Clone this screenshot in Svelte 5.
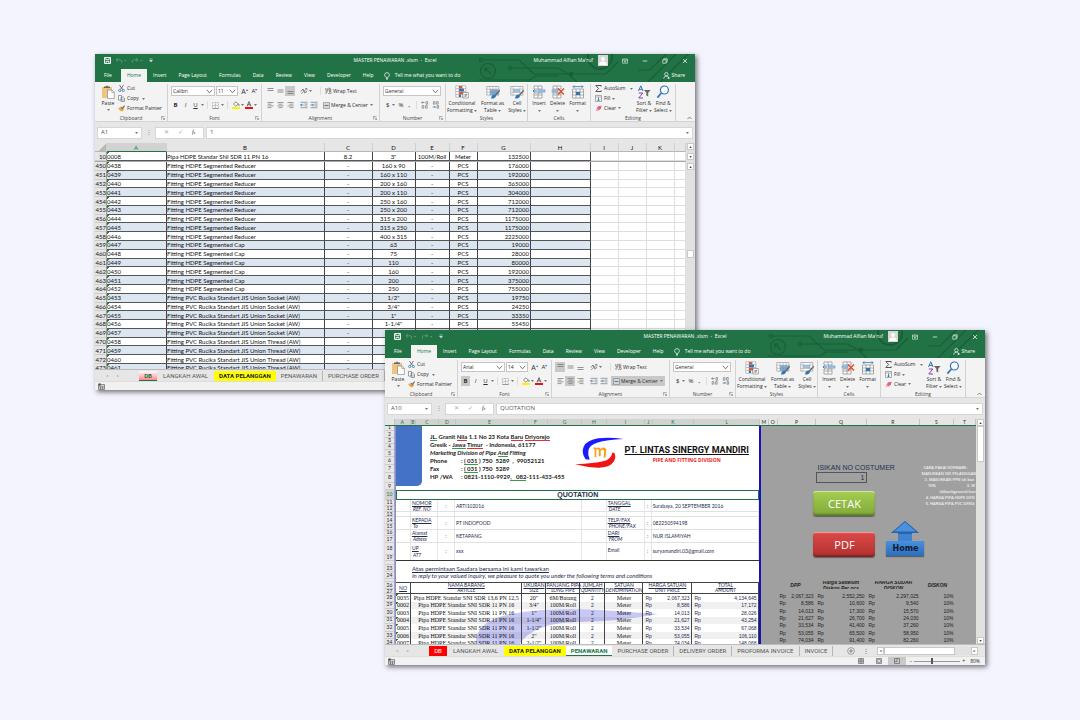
<script>
  const menu = ['File', 'Home', 'Insert', 'Page Layout', 'Formulas', 'Data', 'Review', 'View', 'Developer', 'Help'];

  const stockColumns = ['A', 'B', 'C', 'D', 'E', 'F', 'G', 'H', 'I', 'J', 'K', ''];
  const R = 'Fitting HDPE Segmented Reducer';
  const C = 'Fitting HDPE Segmented Cap';
  const S = 'Fitting PVC Rucika Standart JIS Union Socket (AW)';
  const T = 'Fitting PVC Rucika Standart JIS Union Thread (AW)';
  const stock = [
    [R, '160 x 90', '176000'], [R, '160 x 110', '192000'], [R, '200 x 160', '365000'],
    [R, '200 x 110', '304000'], [R, '250 x 160', '712000'], [R, '250 x 200', '712000'],
    [R, '315 x 200', '1175000'], [R, '315 x 250', '1175000'], [R, '400 x 315', '2225000'],
    [C, '63', '19000'], [C, '75', '28000'], [C, '110', '80000'], [C, '160', '192000'],
    [C, '200', '375000'], [C, '250', '755000'], [S, '1/2"', '19750'], [S, '3/4"', '24250'],
    [S, '1"', '33350'], [S, '1-1/4"', '55450'], [S], [T], [T], [T], [T]
  ].map(([name, size, price], i) => ({ row: 450 + i, code: '0' + (438 + i), name, size, price }));

  const quoteColumns = [
    ['A', 15], ['B', 5], ['C', 22], ['D', 17], ['E', 69], ['F', 24], ['G', 34], ['H', 25], ['I', 38],
    ['J', 7], ['K', 42], ['L', 67], ['M', 8], ['O', 8], ['P', 39], ['Q', 51], ['R', 54], ['S', 34], ['T', 22]
  ];
  const quoteRows = [
    [1, 6], [2, 7], [3, 6], [4, 6], [5, 7], [6, 8], [7, 8], [8, 10], [9, 7], [10, 10], [11, 6], [12, 6],
    [13, 5], [14, 7], [15, 6], [16, 6], [17, 7], [18, 12], [19, 6], ['', 4], [23, 7], [24, 7], ['', 3], [26, 7], [27, 5]
  ];
  const items = [
    ['0035', 'Pipa HDPE Standar SNI SDR 13,6 PN 12,5', '20"', '6M/Batang', '2,067,323', '4,134,645', '2,552,250', '2,297,025'],
    ['0002', 'Pipa HDPE Standar SNI SDR 11 PN 16', '3/4"', '100M/Roll', '8,586', '17,172', '10,600', '9,540'],
    ['0003', 'Pipa HDPE Standar SNI SDR 11 PN 16', '1"', '100M/Roll', '14,013', '28,026', '17,300', '15,570'],
    ['0004', 'Pipa HDPE Standar SNI SDR 11 PN 16', '1-1/4"', '100M/Roll', '21,627', '43,254', '26,700', '24,030'],
    ['0005', 'Pipa HDPE Standar SNI SDR 11 PN 16', '1-1/2"', '100M/Roll', '33,534', '67,068', '41,400', '37,260'],
    ['0006', 'Pipa HDPE Standar SNI SDR 11 PN 16', '2"', '100M/Roll', '53,055', '106,110', '65,500', '58,950'],
    ['0007', 'Pipa HDPE Standar SNI SDR 11 PN 16', '2-1/2"', '100M/Roll', '74,034', '148,068', '91,400', '82,260']
  ];
  const heads = [
    ['NO', ''], ['NAMA BARANG', 'ARTICLE'], ['UKURAN', 'SIZE'], ['PANJANG PIPA', 'LONG PIPE'], ['JUMLAH', 'QUANTITY'],
    ['SATUAN', 'DENOMINATION'], ['HARGA SATUAN', 'UNIT PRICE'], ['TOTAL', 'AMOUNT']
  ];
  const info = [
    ['NOMOR', 'REF. NO', ':', 'ARTI102016', 'TANGGAL', 'DATE', ':', 'Surabaya, 20 SEPTEMBER 2016', 12],
    ['', '', '', '', '', '', '', '', 5],
    ['KEPADA', 'To', ':', 'PT INDOFOOD', 'TELP/FAX', 'PHONE/FAX', ':', '082250594198', 13],
    ['Alamat', 'Adress', ':', 'KETAPANG', 'DARI', 'FROM', ':', 'NUR ISLAMIYAH', 13],
    ['UP', 'ATT', ':', 'xxx', 'Email', '', ':', 'suryamandiri.03@gmail.com', 18]
  ];
  const stockTabs = [['DB', 'pink'], ['LANGKAH AWAL', 'first'], ['DATA PELANGGAN', 'yellow'], ['PENAWARAN', ''], ['PURCHASE ORDER', '']];
  const quoteTabs = [
    ['DB', 'red'], ['LANGKAH AWAL', 'first'], ['DATA PELANGGAN', 'yellow'], ['PENAWARAN', 'active'], ['PURCHASE ORDER', ''],
    ['DELIVERY ORDER', ''], ['PROFORMA INVOICE', ''], ['INVOICE', '']
  ];
</script>

{#snippet arrow()}<svg class="arrow" width="3" height="2" viewBox="0 0 3 2"><path d="M0 0h3L1.5 2z" fill="#777" /></svg>{/snippet}

{#snippet chevron()}<svg class="chev" width="7" height="5" viewBox="0 0 7 5"><path d="M.8.8 3.5 3.8 6.2.8" fill="none" stroke="#555" stroke-width=".8" /></svg>{/snippet}

{#snippet lines(kind)}
  <svg width="7" height="8" viewBox="0 0 7 8">
    {#if kind === 'top'}<path d="M.5 1.5h6M.5 3.5h6" stroke="#777" stroke-width=".8" />
    {:else if kind === 'middle'}<path d="M.5 3h6M.5 5h6" stroke="#777" stroke-width=".8" />
    {:else if kind === 'bottom'}<path d="M.5 4.5h6M.5 6.5h6" stroke="#777" stroke-width=".8" />
    {:else if kind === 'left'}<path d="M.5 1.5h6M.5 3.2h4M.5 4.9h6M.5 6.6h4" stroke="#777" stroke-width=".7" />
    {:else if kind === 'center'}<path d="M.5 1.5h6M1.5 3.2h4M.5 4.9h6M1.5 6.6h4" stroke="#777" stroke-width=".7" />
    {:else}<path d="M.5 1.5h6M2.5 3.2h4M.5 4.9h6M2.5 6.6h4" stroke="#777" stroke-width=".7" />{/if}
  </svg>
{/snippet}

{#snippet launcher()}<svg class="launch" width="4" height="4" viewBox="0 0 4 4"><path d="M.4 3.6V.4h3.2M1.5 1.5l2 2M3.6 1.9v1.7H1.9" fill="none" stroke="#777" stroke-width=".6" /></svg>{/snippet}

{#snippet greenTop()}
  <header class="top">
    <svg class="circuit" width="217" height="28" viewBox="0 0 217 28" fill="none" stroke="#1a5e37" stroke-width="1.2">
      <circle cx="3" cy="6" r="1.6" /><path d="M5 6h36l15 14h34l9 8" />
      <circle cx="10" cy="17" r="7.5" /><path d="M13 20 7 14m0 4v-4h4" />
      <circle cx="32" cy="14" r="1.6" /><path d="M34 14h46l10 6h38l12-12" />
      <path d="M0 26h52l6-4h22" /><circle cx="93" cy="20" r="1.8" fill="#1a5e37" />
      <circle cx="122" cy="3" r="12" stroke-width="2" />
      <path d="M170 28 198 0M182 28 210 0M160 16h12l16-16" />
    </svg>
    <div class="title">
      <div class="quick">
        <svg width="7" height="7" viewBox="0 0 7 7"><path d="M.5.5h6v6h-6zM1.8.5v2.2h3.4V.5M2 6.5V4.4h3v2.1" fill="none" stroke="#fff" stroke-width=".9" /></svg>
        <svg width="12" height="7" viewBox="0 0 12 7"><path d="M3 1 1 2.8 3 4.6M1 2.8h4.5q2 .2 1 3" fill="none" stroke="#5f9a78" stroke-width=".9" /><path d="M9 3h2.4l-1.2 1.4z" fill="#5f9a78" /></svg>
        <svg width="12" height="7" viewBox="0 0 12 7"><path d="M5 1l2 1.8-2 1.8M7 2.8H2.5q-2 .2-1 3" fill="none" stroke="#5f9a78" stroke-width=".9" /><path d="M9 3h2.4l-1.2 1.4z" fill="#5f9a78" /></svg>
        <svg width="4" height="5" viewBox="0 0 4 5"><path d="M.4.8h3.2M.4 2.2h3.2L2 4z" fill="#dfeee5" stroke="#dfeee5" stroke-width=".4" /></svg>
      </div>
      <div class="name">MASTER PENAWARAN .xlsm &nbsp;- &nbsp;Excel</div>
      <div class="user">
        <span>Muhammad Alfian Ma'ruf</span>
        <svg class="avatar" width="10" height="11" viewBox="0 0 10 11"><path d="M0 0h10v11H0z" fill="#d9d6d6" /><circle cx="5" cy="4" r="2" fill="#fff" /><path d="M1 10q0-3.4 4-3.4t4 3.4z" fill="#fff" /></svg>
        <svg width="6" height="6" viewBox="0 0 6 6"><path d="M.5 1h5v4.2h-5zM.5 2.2h5M3 4.8V3M2.2 3.7 3 3l.8.7" fill="none" stroke="#e8f2ec" stroke-width=".6" /></svg>
        <svg width="6" height="6" viewBox="0 0 6 6"><path d="M.8 3h4.4" stroke="#fff" stroke-width=".7" /></svg>
        <svg width="6" height="6" viewBox="0 0 6 6"><path d="M.8 1.8h3.4v3.4H.8zM1.8 1.8v-1h3.4v3.4h-1" fill="none" stroke="#fff" stroke-width=".6" /></svg>
        <svg width="6" height="6" viewBox="0 0 6 6"><path d="m1 1 4 4M5 1 1 5" stroke="#fff" stroke-width=".7" /></svg>
      </div>
    </div>
    <nav class="menu">
      {#each menu as m}<button class:on={m === 'Home'}>{m}</button>{/each}
      <svg class="bulb" width="6" height="8" viewBox="0 0 6 8"><path d="M2 5.4Q.6 4 .6 2.8.8.7 3 .6q2.2.1 2.4 2.2Q5.4 4 4 5.4zM2 6.4h2M2.3 7.4h1.4" fill="none" stroke="#fff" stroke-width=".7" /></svg>
      <button class="tell">Tell me what you want to do</button>
      <button class="share">
        <svg width="7" height="7" viewBox="0 0 7 7"><circle cx="3.4" cy="2.2" r="1.7" fill="none" stroke="#fff" stroke-width=".7" /><path d="M.6 6.8q.3-2.6 2.8-2.7 1.3.1 2 .8M4.4 6h2.4M5.6 4.8v2.2" fill="none" stroke="#fff" stroke-width=".7" /></svg>
        Share
      </button>
    </nav>
  </header>
{/snippet}

{#snippet ribbon(o)}
  <section class="ribbon">
    <div class="group">
      <div class="tools clip">
        <button class="big paste">
          <svg width="14" height="14" viewBox="0 0 14 14"><path d="M1 2h10v11H1z" fill="#edc57c" /><path d="M3 3V1.5h2Q6-.4 7 1.5h2V3z" fill="#666" /><path d="M6.5 5H11l2.3 2.2v6.4H6.5z" fill="#fff" stroke="#888" stroke-width=".7" /><path d="M10.8 5v2.5h2.5" fill="none" stroke="#888" stroke-width=".6" /></svg>
          <span>Paste</span>{@render arrow()}
        </button>
        <div class="stack">
          <button><svg width="7" height="7" viewBox="0 0 7 7"><path d="M1.5 0l3 4.5M5.5 0l-3 4.5" stroke="#555" stroke-width=".8" /><circle cx="1.7" cy="5.5" r="1.1" fill="none" stroke="#2f75b5" stroke-width=".8" /><circle cx="5.3" cy="5.5" r="1.1" fill="none" stroke="#2f75b5" stroke-width=".8" /></svg>Cut</button>
          <button><svg width="7" height="7" viewBox="0 0 7 7"><path d="M.5.5h3v4.6h-3zM3 2h2.3l1.2 1.2v3.3H3z" fill="#fff" stroke="#777" stroke-width=".7" /><path d="M3.8 4h2M3.8 5.2h2" stroke="#2f75b5" stroke-width=".5" /></svg>Copy&nbsp; {@render arrow()}</button>
          <button><svg width="7" height="7" viewBox="0 0 7 7"><path d="m6.8.3-2.5 2 .9 1L7 .9z" fill="#555" /><path d="M.2 3 3.5 2l2 2-1 2.5L2 5.5z" fill="#e8a33d" /><path d="M3.2 1.8l2.4 2.6" stroke="#444" stroke-width=".9" /></svg>Format Painter</button>
        </div>
      </div>
      <footer>Clipboard {@render launcher()}</footer>
    </div>
    <div class="group">
      <div class="tools two">
        <div class="line">
          <label class="pick face"><select aria-label="Font"><option>{o.font}</option></select>{@render chevron()}</label>
          <label class="pick size"><select aria-label="Font size"><option>{o.size}</option></select>{@render chevron()}</label>
          <button class="grow">A<sup>▴</sup></button><button class="grow less">A<sup>▾</sup></button>
        </div>
        <div class="line letters">
          <button class="sq" class:down={o.bold}><b>B</b></button><button class="sq"><i>I</i></button>
          <button class="sq"><u>U</u></button>{@render arrow()}
          <span class="rule"></span>
          <button class="sq"><svg width="7" height="7" viewBox="0 0 7 7"><path d="M.5.5h6v6h-6zM3.5.5v6M.5 3.5h6" fill="none" stroke="#999" stroke-width=".6" stroke-dasharray="1 .5" /><path d="M.4 6.6h6.2" stroke="#666" stroke-width=".6" /></svg></button>{@render arrow()}
          <span class="rule"></span>
          <button class="sq"><svg width="8" height="8" viewBox="0 0 8 8"><path d="M1.5 3 4 .8l2.3 2.4L3.6 5z" fill="#fff" stroke="#555" stroke-width=".7" /><path d="M6.6 2.8q1 1.4.3 2.2" stroke="#2f75b5" stroke-width=".8" fill="none" /><path d="M0 6h8v2H0z" fill="#fff200" /></svg></button>{@render arrow()}
          <button class="sq"><svg width="8" height="8" viewBox="0 0 8 8"><path d="M2 5.4 4 .6l2 4.8M2.7 3.8h2.6" fill="none" stroke="#444" stroke-width=".8" /><path d="M0 6h8v2H0z" fill="#e5121c" /></svg></button>{@render arrow()}
        </div>
      </div>
      <footer>Font {@render launcher()}</footer>
    </div>
    <div class="group">
      <div class="tools two">
        <div class="line">
          {#each ['top', 'middle', 'bottom'] as k}<button class="al" class:down={o.valign === k}>{@render lines(k)}</button>{/each}
          <button class="al far"><svg width="9" height="8" viewBox="0 0 9 8"><path d="M1 7 7 1.5M7 1.5H5M7 1.5v2" stroke="#777" stroke-width=".7" fill="none" /><path d="M1 4.5 3 2l1.5 3M4 6l3-1.5" stroke="#555" stroke-width=".8" fill="none" /></svg></button>{@render arrow()}
          <span class="rule tall"></span>
          <button class="txt"><svg width="7" height="8" viewBox="0 0 7 8"><path d="M.8 1v2.4h2V1.8h-1M4 .5v3h1.8V1.8H4M1 7V4.8h2M4 4.5h1.8Q6.8 5 6 6.4H3.5l1-1" fill="none" stroke="#666" stroke-width=".7" /></svg>Wrap Text</button>
        </div>
        <div class="line">
          {#each ['left', 'center', 'right'] as k}<button class="al" class:down={o.halign === k}>{@render lines(k)}</button>{/each}
          <button class="al far"><svg width="8" height="8" viewBox="0 0 8 8"><path d="M.5 1.3h7M4.5 3.1h3M4.5 4.9h3M.5 6.7h7" stroke="#777" stroke-width=".7" /><path d="M3.6 4H.6M1.8 2.8.6 4l1.2 1.2" stroke="#2f75b5" stroke-width=".8" fill="none" /></svg></button>
          <button class="al"><svg width="8" height="8" viewBox="0 0 8 8"><path d="M.5 1.3h7M4.5 3.1h3M4.5 4.9h3M.5 6.7h7" stroke="#777" stroke-width=".7" /><path d="M.4 4h3M2.4 2.8 3.6 4 2.4 5.2" stroke="#2f75b5" stroke-width=".8" fill="none" /></svg></button>
          <button class="txt merge" class:down={o.merge}><svg width="7" height="7" viewBox="0 0 7 7"><path d="M.5.5h6v6h-6zM.5 2h6M.5 5h6" fill="#fff" stroke="#777" stroke-width=".6" /><path d="M1.4 3.5h4.2" stroke="#2f75b5" stroke-width=".9" /></svg>Merge &amp; Center&nbsp; {@render arrow()}</button>
        </div>
      </div>
      <footer>Alignment {@render launcher()}</footer>
    </div>
    <div class="group">
      <div class="tools two">
        <div class="line"><label class="pick wide"><select aria-label="Number format"><option>General</option></select>{@render chevron()}</label></div>
        <div class="line nums">
          <span>$</span>{@render arrow()}<span>%</span><b>,</b><span class="rule"></span>
          <svg width="8" height="8" viewBox="0 0 8 8"><path d="M3.5 1.5H.6M1.6.6.6 1.5l1 1" stroke="#2f75b5" stroke-width=".7" fill="none" /><path d="M5 .6h1.6v2.6H5zM1.2 4.6h1.6v2.6H1.2zM4.6 4.6h1.6v2.6H4.6z" fill="none" stroke="#666" stroke-width=".6" /></svg>
          <svg width="8" height="8" viewBox="0 0 8 8"><path d="M.6 6h2.6M2.4 5l1 1-1 1" stroke="#2f75b5" stroke-width=".7" fill="none" /><path d="M1.4.6H3v2.6H1.4zM4.6.6h1.6v2.6H4.6zM5 4.6h1.6v2.6H5z" fill="none" stroke="#666" stroke-width=".6" /></svg>
        </div>
      </div>
      <footer>Number {@render launcher()}</footer>
    </div>
    <div class="group">
      <div class="tools bigs">
        <button class="big">
          <svg width="14" height="14" viewBox="0 0 14 14"><path d="M.8.8h10v11.4h-10zM4 .8v11.4M7.4.8v11.4M.8 3.6h10M.8 6.5h10M.8 9.4h10" fill="#fff" stroke="#999" stroke-width=".6" /><path d="M4 1h3v2.4H4zM4 6.8h4v2.4H4z" fill="#e2542c" /><path d="M4 3.8h5v2.4H4zM4 9.6h2v2.4H4z" fill="#2f75b5" /><path d="M8 7.5h5.4V13H8z" fill="#fff" stroke="#777" stroke-width=".6" /><path d="M9.3 9.6h2.8M9.3 11h2.8M11.8 8.6 9.8 12" stroke="#555" stroke-width=".5" /></svg>
          <span>Conditional<br />Formatting {@render arrow()}</span>
        </button>
        <button class="big">
          <svg width="14" height="14" viewBox="0 0 14 14"><path d="M.8 1.5h12v8.6H.8z" fill="#fff" stroke="#888" stroke-width=".6" /><path d="M4 4.4h8.8v5.7H4z" fill="#7fb0dd" /><path d="M.8 4.2h12M.8 7.2h12M4 1.5v8.6M7 1.5v8.6M10 1.5v8.6" stroke="#888" stroke-width=".5" /><path d="m13.6 4.4-5 5.6 1 1 4.4-5z" fill="#666" /><path d="M8.6 9.6q-3 .2-3.6 3.9 4 .2 5-2.6z" fill="#2f75b5" /></svg>
          <span>Format as<br />Table {@render arrow()}</span>
        </button>
        <button class="big">
          <svg width="14" height="14" viewBox="0 0 14 14"><path d="M.8 1.5h12v8.6H.8z" fill="#fff" stroke="#888" stroke-width=".6" /><path d="M3 4h7v3.4H3z" fill="#9cc3e6" /><path d="M.8 4h12M.8 7.4h12M3 1.5v8.6M10 1.5v8.6" stroke="#999" stroke-width=".5" /><path d="m13.6 4.4-5 5.6 1 1 4.4-5z" fill="#666" /><path d="M8.6 9.6q-3 .2-3.6 3.9 4 .2 5-2.6z" fill="#2f75b5" /></svg>
          <span>Cell<br />Styles {@render arrow()}</span>
        </button>
      </div>
      <footer>Styles</footer>
    </div>
    <div class="group">
      <div class="tools bigs cells">
        <button class="big">
          <svg width="14" height="14" viewBox="0 0 14 14"><path d="M2 1h8v3H2zM6 1v3M2 10h8v3H2zM6 10v3M2 10V8h8v2M6 8v2" fill="#fff" stroke="#888" stroke-width=".7" /><path d="M6 4.8h7v2.4H6z" fill="#9cc3e6" stroke="#5b8fc0" stroke-width=".5" /><path d="M5 6H1M2.6 4.5 1 6l1.6 1.5" stroke="#2f75b5" stroke-width=".9" fill="none" /></svg>
          <span>Insert<br />{@render arrow()}</span>
        </button>
        <button class="big">
          <svg width="14" height="14" viewBox="0 0 14 14"><path d="M2 1h8v3H2zM6 1v3M2 10h8v3H2zM6 10v3M2 10V8h8v2M6 8v2" fill="#fff" stroke="#888" stroke-width=".7" /><path d="M1 4.8h6v2.4H1z" fill="#9cc3e6" stroke="#5b8fc0" stroke-width=".5" /><path d="m7 3.5 6 6M13 3.5l-6 6" stroke="#dc4a26" stroke-width="1.4" /></svg>
          <span>Delete<br />{@render arrow()}</span>
        </button>
        <button class="big">
          <svg width="14" height="14" viewBox="0 0 14 14"><path d="M1.5 4h11v9h-11zM1.5 7h11M1.5 10h11M5 4v9M9 4v9" fill="#fff" stroke="#888" stroke-width=".7" /><path d="M5 7h4v3H5z" fill="#2f75b5" /><path d="M2 1.6h10M3.2.4 2 1.6l1.2 1.2M10.8.4 12 1.6l-1.2 1.2" fill="none" stroke="#2f75b5" stroke-width=".8" /></svg>
          <span>Format<br />{@render arrow()}</span>
        </button>
      </div>
      <footer>Cells</footer>
    </div>
    <div class="group">
      <div class="tools edit">
        <div class="stack">
          <button><svg width="7" height="7" viewBox="0 0 7 7"><path d="M6.2 1.6V.5H.8l2.8 3L.8 6.5h5.4V5.4" fill="none" stroke="#444" stroke-width=".9" /></svg>AutoSum &nbsp;{@render arrow()}</button>
          <button><svg width="7" height="7" viewBox="0 0 7 7"><path d="M.5.5h6v6h-6zM.5 2h6" fill="#fff" stroke="#777" stroke-width=".6" /><path d="M3.5 2.4V6M2.2 4.6 3.5 6l1.3-1.4" fill="none" stroke="#2f75b5" stroke-width=".9" /></svg>Fill {@render arrow()}</button>
          <button><svg width="7" height="7" viewBox="0 0 7 7"><path d="M3 1.2 6.6.8 6 3.2 3.6 5.8.8 5.2z" fill="#e0647c" /><path d="M.8 5.2 1.8 3.4l2.4 1.8-.6.8z" fill="#f4b3bf" /></svg>Clear {@render arrow()}</button>
        </div>
        <button class="big">
          <svg width="14" height="14" viewBox="0 0 14 14"><path d="M1.5 6 3.8.8 6 6M2.3 4.4h3" fill="none" stroke="#2f75b5" stroke-width="1" /><path d="M1.8 8h4l-4 5h4.2" fill="none" stroke="#8a3fa0" stroke-width="1" /><path d="M7 5h6.6L11.2 7.8v3.7L9.4 10.5V7.8z" fill="#666" /></svg>
          <span>Sort &amp;<br />Filter {@render arrow()}</span>
        </button>
        <button class="big">
          <svg width="14" height="14" viewBox="0 0 14 14"><circle cx="8.4" cy="5" r="4" fill="#fff" stroke="#2f75b5" stroke-width="1.2" /><path d="M5.4 8 1.4 12.6" stroke="#2f75b5" stroke-width="1.7" /></svg>
          <span>Find &amp;<br />Select {@render arrow()}</span>
        </button>
      </div>
      <footer>Editing</footer>
    </div>
    <div class="fold"><svg width="5" height="4" viewBox="0 0 5 4"><path d="M.5 3 2.5 1l2 2" fill="none" stroke="#555" stroke-width=".7" /></svg></div>
  </section>
  <section class="formula">
    <label class="cellname"><select aria-label="Name box"><option>{o.cell}</option></select>{@render arrow()}</label>
    <span class="dots">⋮</span>
    <div class="fx"><span>✕</span><span>✓</span><i>f<small>x</small></i></div>
    <div class="value"><input aria-label="Formula bar" value={o.value} />{@render arrow()}</div>
  </section>
{/snippet}

{#snippet sheetTabs(tabs, full)}
  <footer class="tabs">
    <span class="navs"><i>◂</i><i>▸</i></span>
    {#each tabs as [t, cls]}<button class={cls}>{t}</button>{/each}
    {#if full}
      <svg class="plus" width="8" height="8" viewBox="0 0 8 8"><circle cx="4" cy="4" r="3.4" fill="none" stroke="#777" stroke-width=".6" /><path d="M4 2v4M2 4h4" stroke="#777" stroke-width=".8" /></svg>
      <span class="vdots">⋮</span>
      <div class="hbar"><i>◂</i><b></b><i>▸</i></div>
    {/if}
  </footer>
{/snippet}

{#snippet macro()}<svg width="7" height="7" viewBox="0 0 7 7"><path d="M.5 1.5h6v5h-6zM.5 3.2h6M2.5 3.2v3.3M4.5 3.2v3.3M.5 5h6" fill="none" stroke="#555" stroke-width=".6" /><circle cx="1.6" cy="1.5" r="1.3" fill="#555" /></svg>{/snippet}

<main>
  <article class="window stock">
    {@render greenTop()}
    {@render ribbon({ font: 'Calibri', size: '11', bold: false, valign: 'bottom', halign: '', merge: false, cell: 'A1', value: '1' })}
    <div class="sheet">
      <div class="tables">
        <table class="grid">
          <colgroup><col class="rh" /><col class="a" /><col class="b" /><col class="c" /><col class="d" /><col class="e" /><col class="f" /><col class="g" /><col class="a" /><col class="i" /><col class="i" /><col class="i" /><col /></colgroup>
          <thead><tr><th class="corner"></th>{#each stockColumns as c}<th class:sel={c === 'A'}>{c}</th>{/each}</tr></thead>
          <tbody>
            <tr><th>10</th><td class="code">0008</td><td>Pipa HDPE Standar SNI SDR 11 PN 16</td><td class="mid">8.2</td><td class="mid">3"</td><td class="mid">100M/Roll</td><td class="mid">Meter</td><td class="num">132500</td><td></td><td class="off"></td><td class="off"></td><td class="off"></td><td class="off"></td></tr>
          </tbody>
        </table>
        <div class="split"></div>
        <div class="scroll">
          <table class="grid body">
            <colgroup><col class="rh" /><col class="a" /><col class="b" /><col class="c" /><col class="d" /><col class="e" /><col class="f" /><col class="g" /><col class="a" /><col class="i" /><col class="i" /><col class="i" /><col /></colgroup>
            <tbody>
              {#each stock as r, i}
                <tr class:tint={i % 2 === 1}>
                  <th>{r.row}</th><td class="code">{r.code}</td><td>{r.name}</td><td class="mid">-</td>
                  <td class="mid">{r.size ?? ''}</td><td class="mid">{r.size ? '-' : ''}</td><td class="mid">{r.size ? 'PCS' : ''}</td><td class="num">{r.price ?? ''}</td><td></td>
                  <td class="off"></td><td class="off"></td><td class="off"></td><td class="off"></td>
                </tr>
              {/each}
            </tbody>
          </table>
        </div>
      </div>
      <div class="vbar twin"><i>▴</i><i>▾</i><i class="low">▴</i><b></b></div>
    </div>
    {@render sheetTabs(stockTabs, false)}
    <div class="status">{@render macro()}</div>
  </article>

  <article class="window quote">
    {@render greenTop()}
    {@render ribbon({ font: 'Arial', size: '14', bold: true, valign: 'top', halign: 'center', merge: true, cell: 'A10', value: 'QUOTATION' })}
    <div class="sheet">
      <div class="work">
        <div class="letters-row">
          <span class="corner"></span>
          {#each quoteColumns as [c, w], i}<span class:sel={i < 12} style="flex-grow:{w}">{c}</span>{/each}
        </div>
        <div class="page">
          <div class="rownums">
            {#each quoteRows as [n, h]}<span class:sel={n === 10} style="height:{h}px">{n}</span>{/each}
            <div class="rest">{#each [28, 29, 30, 31, 32, 33, 34] as n}<span>{n}</span>{/each}</div>
          </div>
          <div class="paper">
            <div class="letterhead">
              <div class="block"></div>
              <address>
                <p><u class="g">JL.</u> Granit <u class="r">Nila</u> 1.1 No 23 Kota <u class="r">Baru</u> <u class="r">Driyorejo</u></p>
                <p>Gresik - <u class="g">Jawa</u> <u class="r">Timur</u>&nbsp; - Indonesia, 61177</p>
                <p><em>Marketing Division of Pipe <u class="g">And</u> Fitting</em></p>
                <p><span>Phone</span>: <u class="g">( 031</u> ) 750&nbsp; 5289&nbsp; ,&nbsp; 99052121</p>
                <p><span>Fax</span>: <u class="g">( 031</u> ) 750&nbsp; 5289</p>
                <p><span>HP /WA</span>: 0821-1110-9929<u class="g">,&nbsp;&nbsp; 082</u>-111-433-455</p>
              </address>
              <svg class="logo" width="52" height="34" viewBox="0 0 156 102">
                <path d="M32 76Q18 56 26 38 36 18 70 13 104 9 146 15 96 17 66 26 42 34 40 50 38 62 44 77z" fill="#1a1aff" />
                <path d="M0 91Q60 88 84 82 108 76 112 56L118 56Q126 74 112 88 98 102 68 101 34 100 0 91z" fill="#f01414" />
                <path d="M54 42q8-6 10 2v26h-5V48q-2-5-5-6zM62 44q10-8 15 1v22h-6V48q-3-4-9-1zM77 45q10-9 17 1l-2 22q-3 6-8 1 4 0 3-3V50q-3-5-10 0z" fill="#f6a01e" />
              </svg>
              <div class="brand"><h1>PT. LINTAS SINERGY MANDIRI</h1><h2>PIPE AND FITTING DIVISION</h2></div>
            </div>
            <div class="heading">QUOTATION</div>
            <div class="info">
              {#each info as [a, b, c, d, e, f, g, h, size]}
                <div class="irow" style="height:{size}px">
                  <span></span><span class="lab"><u>{a}</u><em>{b}</em></span><span class="colon">{c}</span><span class="val">{d}</span>
                  <span></span><span class="lab"><u class:plain={e === 'Email'}>{e}</u><em>{f}</em></span><span class="colon">{g}</span><span class="val">{h}</span>
                </div>
              {/each}
            </div>
            <div class="note"><p><u>Atas permintaan Saudara bersama ini kami tawarkan</u></p><p><em>In reply to your valued inquiry, we pleasure to quote you under the following terms and conditions</em></p></div>
            <div class="lists">
              <svg class="mark" width="190" height="38" viewBox="0 0 190 38" preserveAspectRatio="none"><path d="M0 38Q-2 14 36 7 76 0 128 3L187 7Q150 14 104 15 58 16 44 38z" fill="#4a4ae0" fill-opacity=".3" /></svg>
              <table class="items">
                <colgroup><col class="k1" /><col /><col class="k2" /><col class="k3" /><col class="k4" /><col class="k5" /><col class="k6" /><col class="k7" /></colgroup>
                <thead><tr>{#each heads as [a, b]}<th><u>{a}</u><em>{b}</em></th>{/each}</tr></thead>
                <tbody>
                  {#each items as r}
                    <tr><td class="code">{r[0]}</td><td class="mid">{r[1]}</td><td class="mid">{r[2]}</td><td class="mid">{r[3]}</td><td class="mid sans">2</td><td class="mid">Meter</td>
                      <td class="sans"><div><span>Rp</span><span>{r[4]}</span></div></td><td class="sans"><div><span>Rp</span><span>{r[5]}</span></div></td></tr>
                  {/each}
                </tbody>
              </table>
            </div>
          </div>
          <div class="side">
            <div class="panel">
              <div class="form">
                <label for="customer">ISIKAN NO COSTUMER</label>
                <input id="customer" value="1" />
                <button class="cetak">CETAK</button>
                <button class="pdf">PDF</button>
              </div>
              <a class="home" href="#home">
                <svg width="28" height="20" viewBox="0 0 28 20"><path d="M14 0 28 12h-7v8H7v-8H0z" fill="#3f83d0" /><path d="M14 0 28 12h-7v1H7v-1H0z" fill="#2b62a8" /><path d="M14 1 25 10.5H3z" fill="#4a90de" /></svg>
                <span>Home</span>
              </a>
              <div class="tips">
                <p>&nbsp;&nbsp;CARA PAKAI SOFWARE:</p><p>MASUKKAN NO PELANGGAN</p><p>&nbsp;&nbsp;&nbsp;2. MASUKKAN PPN (di bac</p><p>&nbsp;&nbsp;&nbsp;&nbsp;&nbsp;&nbsp;10% <span></span>3. M</p><p class="in">(dibackground kun</p><p>&nbsp;&nbsp;&nbsp;&nbsp;4. HARGA PIPA HDPE DEN</p><p>&nbsp;&nbsp;&nbsp;&nbsp;5. HARGA PIPA PVC DENG</p>
              </div>
            </div>
            <table class="calc">
              <colgroup><col class="q1" /><col class="q2" /><col class="q3" /><col class="q4" /><col /></colgroup>
              <thead><tr><th>DPP</th><th><div class="cut">Harga Sebelum<br />Diskon Per pcs</div></th><th><div class="cut">HARGA SUDAH<br />DISKON</div></th><th>DISKON</th><th></th></tr></thead>
              <tbody>
                {#each items as r}
                  <tr><td><div><span>Rp</span><span>{r[4]}</span></div></td><td><div><span>Rp</span><span>{r[6]}</span></div></td><td><div><span>Rp</span><span>{r[7]}</span></div></td><td class="num">10%</td><td></td></tr>
                {/each}
              </tbody>
            </table>
          </div>
        </div>
      </div>
      <div class="vbar"><i>▴</i><b class="long"></b><i class="end">▾</i></div>
    </div>
    {@render sheetTabs(quoteTabs, true)}
    <div class="status">
      {@render macro()}
      <div class="views">
        <span><svg width="6" height="6" viewBox="0 0 6 6"><path d="M.5.5h5v5h-5zM.5 2.2h5M.5 3.8h5M2.2.5v5M3.8.5v5" fill="none" stroke="#555" stroke-width=".6" /></svg></span>
        <span><svg width="6" height="6" viewBox="0 0 6 6"><path d="M.5.5h5v5h-5zM1.6 1.6h2.8v2.8H1.6z" fill="none" stroke="#555" stroke-width=".6" /></svg></span>
        <span class="on"><svg width="6" height="6" viewBox="0 0 6 6"><path d="M.5.5h5v5h-5zM.5 3.5H3v-3" fill="none" stroke="#555" stroke-width=".6" /></svg></span>
      </div>
      <span>−</span><input type="range" aria-label="Zoom" min="10" max="150" value="62" /><span>+</span><span class="pct">80%</span>
    </div>
  </article>
</main>

<style>
  :global(body) { background: #f3f4fd; }
  main { position: relative; min-height: 100vh; overflow: hidden; font: 5px/7px "Open Sans", "Noto Sans", sans-serif; color: #2b2b2b; }
  main :is(*, *::before) { box-sizing: border-box; }
  svg { display: block; flex: none; }
  p, h1, h2 { margin: 0; }
  button, select, input { font: inherit; color: inherit; border: 0; background: none; padding: 0; margin: 0; border-radius: 0; outline: 0; }
  button { white-space: nowrap; }
  select { appearance: none; width: 100%; height: 100%; }
  .window { position: absolute; background: #e6e6e6; box-shadow: 2px 2px 5px rgba(0, 0, 0, .55); }
  .stock { left: 95px; right: 385px; top: 54px; }
  .quote { left: 385px; right: 95px; top: 330px; }

  .top { position: relative; background: #217346; color: #fff; height: 28px; overflow: hidden; }
  .circuit { position: absolute; right: 0; top: 0; }
  .title, .menu { position: relative; display: flex; align-items: center; }
  .title { height: 13px; display: grid; grid-template-columns: 1fr auto 1fr; }
  .quick { display: flex; gap: 4px; padding-left: 9px; align-items: center; }
  .quick svg:last-child { margin-left: 2px; }
  .user { display: flex; justify-content: flex-end; align-items: center; gap: 14px; padding-right: 7px; white-space: nowrap; }
  .user span { margin-right: -9px; }
  .avatar { align-self: flex-start; }
  .menu { height: 15px; padding: 2px 10px 0 3px; }
  .menu button { height: 13px; padding: 0 6px; }
  .menu button:first-child { margin-right: 3px; }
  .menu .on { background: #f3f3f3; color: #217346; }
  .bulb { margin-left: 4px; }
  .menu .tell { padding: 0 5px; }
  .share { margin-left: auto; display: flex; align-items: center; gap: 2px; }
  .menu .share { padding: 0; }

  .ribbon { height: 40px; display: grid; grid-template-columns: 73fr 94fr 118fr 66fr 82fr 63fr 85fr 19fr; background: #f3f3f3; border-bottom: 1px solid #d5d5d5; }
  .group { position: relative; display: flex; flex-direction: column; justify-content: space-between; margin: 2px 0 0; border-right: 1px solid #d2d2d2; min-width: 0; }
  .group footer { position: relative; text-align: center; height: 7px; line-height: 8px; color: #444; }
  .launch { position: absolute; right: 2px; top: 2px; }
  .arrow { display: inline-block; vertical-align: middle; }
  .tools { display: flex; height: 29px; }
  .clip { padding-left: 6px; gap: 3px; }
  .stack { display: flex; flex-direction: column; }
  .stack button { display: flex; align-items: center; gap: 2px; height: 10px; white-space: nowrap; }
  .big { display: flex; flex-direction: column; align-items: center; gap: 1px; padding-top: 1px; line-height: 7px; }
  .paste .arrow { margin-top: 1px; }
  .two { flex-direction: column; gap: 4px; padding: 2px 0 0 3px; }
  .line { display: flex; align-items: center; height: 10px; }
  .pick { display: flex; align-items: center; background: #fff; border: 1px solid #c6c6c6; height: 10px; padding: 0 1px; margin-right: 1px; }
  .face { width: 44px; }
  .size { width: 22px; }
  .wide { width: 58px; }
  .grow { font-size: 7px; width: 9px; margin-left: 1px; }
  .grow sup { font-size: 4px; color: #2f75b5; vertical-align: top; line-height: 3px; }
  .grow.less { font-size: 6px; }
  .sq { width: 9px; height: 10px; display: grid; place-items: center; margin-right: 1px; font-size: 6px; }
  .rule { width: 1px; height: 8px; background: #dcdcdc; margin: 0 3px; }
  .down { background: #c8c8c8; }
  .al { width: 10px; height: 10px; display: grid; place-items: center; }
  .al.far { margin-left: 4px; }
  .rule.tall { margin: 0 2px 0 8px; }
  .al + .txt { margin-left: 2px; }
  .txt { display: flex; align-items: center; gap: 1px; height: 10px; padding: 0 2px; }
  .nums { gap: 3px; padding-left: 3px; }
  .nums > span { font-size: 6px; }
  .nums b { margin: 0 2px; }
  .nums .rule { margin: 0 1px; }
  .bigs { justify-content: center; gap: 4px; }
  .edit { padding-left: 4px; gap: 2px; }
  .edit .stack { width: 39px; }
  .fold { display: flex; align-items: flex-end; justify-content: center; padding: 0 0 1px 8px; }

  .formula { display: flex; align-items: center; height: 21px; padding: 0 2px; font-size: 6px; color: #555; }
  .cellname, .fx, .value { display: flex; align-items: center; height: 12px; background: #fff; border: 1px solid #d6d6d6; padding: 0 3px; }
  .cellname { width: 45px; }
  .dots { width: 13px; text-align: center; color: #888; }
  .fx { width: 49px; justify-content: space-around; color: #aaa; }
  .fx i { font-family: "Liberation Serif", serif; color: #333; }
  .fx small { font-size: 4px; }
  .value { flex: 1; margin-left: 2px; }
  .value input { flex: 1; min-width: 0; }

  .sheet { display: flex; }
  .tables { flex: 1; min-width: 0; background: #fff; }
  .grid { width: 100%; table-layout: fixed; border-collapse: separate; border-spacing: 0; font: 6px/7px Lato, sans-serif; color: #111; }
  .grid col.rh { width: 12px; } .grid col.a { width: 60px; } .grid col.b { width: 158px; } .grid col.c { width: 48px; }
  .grid col.d { width: 43px; } .grid col.e { width: 34px; } .grid col.f { width: 28px; } .grid col.g { width: 53px; } .grid col.i { width: 28px; }
  .grid :is(th, td) { padding: 0 1px 0 0; height: 9px; white-space: nowrap; overflow: hidden; font-weight: 400; }
  .grid th { background: #e6e6e6; text-align: right; }
  .grid tbody th { padding: 0; }
  .grid thead th { text-align: center; border-right: 1px solid #cfcfcf; border-bottom: 1px solid #b5b5b5; }
  .grid thead th.sel { background: #d2d2d2; color: #217346; border-bottom-color: #217346; }
  .grid .corner { background: linear-gradient(135deg, #e6e6e6 60%, #b9b9b9 60%); }
  .grid tbody th { border-right: 1px solid #999; border-bottom: 1px solid #ccc; }
  .grid td { border-right: 1px solid #444; border-bottom: 1px solid #555; }
  .grid td.off { border-color: #dedede; background: #fff; }
  .grid.body { height: 211px; }
  .grid.body :is(th, td) { height: auto; }
  .tint td { background-color: #dce6f1; }
  .code { background-image: linear-gradient(135deg, #168a2c 2px, transparent 2px); background-repeat: no-repeat; }
  .mid { text-align: center; }
  td.num { text-align: right; }
  .split { height: 1px; background: #aaa; }
  .scroll { height: 207px; overflow: hidden; }
  .vbar { width: 9px; display: flex; flex-direction: column; background: #e1e1e1; padding: 0 1px; }
  .vbar i { height: 7px; background: #fff; border: 1px solid #c8c8c8; font: 4px/5px "DejaVu Sans", sans-serif; text-align: center; }
  .vbar b { height: 8px; background: #fff; border: 1px solid #c8c8c8; margin-top: 80px; }
  .vbar .long { height: 36px; margin: 0; }
  .twin i:nth-child(2) { margin-top: 3px; }
  .vbar .low { margin-top: 3px; }
  .vbar .end { margin-top: auto; }

  .tabs { position: relative; display: flex; align-items: center; height: 12px; background: #e6e6e6; border-top: 1px solid #bcbcbc; color: #555; font-family: Roboto, sans-serif; font-size: 6px; }
  .navs { width: 44px; display: flex; gap: 9px; padding-left: 11px; color: #aaa; font: 4px/7px "DejaVu Sans", sans-serif; }
  .tabs button { height: 10px; padding: 0 5px; border-right: 1px solid #b5b5b5; }
  .tabs .pink, .tabs .red, .tabs .yellow, .tabs .active, .tabs .first { border-right: 0; }
  .tabs .first { padding: 0 6px; }
  .tabs .pink { background: linear-gradient(#fff, #f88); border-bottom: 1px solid #217346; color: #217346; font-weight: 700; width: 18px; padding: 0; }
  .tabs .red { background: #f00; color: #fff; width: 18px; padding: 0; }
  .tabs .yellow { background: #ff0; color: #222; font-weight: 700; }
  .tabs .active { background: #fff; border-bottom: 1px solid #217346; color: #217346; font-weight: 700; }
  .plus { margin-left: 14px; }
  .vdots { margin: 0 8px 0 auto; }
  .hbar { width: 101px; height: 8px; margin-right: 7px; display: flex; background: #e1e1e1; }
  .hbar i { width: 7px; background: #fff; border: 1px solid #c8c8c8; font: 4px/6px "DejaVu Sans", sans-serif; text-align: center; }
  .hbar b { width: 71px; background: #fff; border: 1px solid #c8c8c8; margin-right: auto; }
  .status { height: 9px; display: flex; align-items: center; background: #f1f1f1; padding: 0 5px 0 3px; border-top: 1px solid #ddd; }
  .views { display: flex; margin-left: auto; margin-right: 3px; }
  .views span { width: 18px; height: 8px; display: grid; place-items: center; }
  .views .on { background: #c9c9c9; }
  .status input { appearance: none; width: 46px; height: 7px; margin: 0 2px; background: linear-gradient(#999, #999) center / 100% 1px no-repeat; }
  .status input::-webkit-slider-thumb { appearance: none; width: 2px; height: 6px; background: #555; }
  .pct { margin-left: 5px; }

  .work { flex: 1; min-width: 0; }
  .letters-row { display: flex; height: 6px; font: 5px/6px Lato, sans-serif; text-align: center; }
  .letters-row span { flex: 1 1 0; width: 0; border-right: 1px solid #c4c4c4; }
  .letters-row .corner { flex: 0 0 10px; }
  .letters-row .sel { background: #d2d2d2; color: #217346; }
  .page { display: flex; height: 219px; overflow: hidden; border-top: 1px solid #217346; }
  .rownums { flex: 0 0 10px; font: 5px/5px Lato, sans-serif; text-align: center; border-right: 1px solid #aaa; margin-top: -1px; }
  .rownums span { display: flex; align-items: center; justify-content: center; border-bottom: 1px solid #ccc; }
  .rownums .sel { background: #d2d2d2; color: #217346; }
  .rest { display: grid; grid-template-rows: repeat(7, 1fr); height: 53px; }
  .paper { flex: 366 1 0; min-width: 0; background: #fff; border-right: 2px solid #1414b4; border-left: 1px solid #8a8ae0; color: #1f2b4d; font-family: Lato, sans-serif; margin-top: -1px; }
  .letterhead { display: flex; height: 65px; }
  .block { width: 26px; height: 61px; background: #4472c4; border-radius: 0 0 5px 0; }
  address { margin-left: 8px; padding-top: 8px; width: 145px; font: 700 6px/8px Lato, sans-serif; color: #222; white-space: nowrap; }
  address span { display: inline-block; width: 31px; }
  address u { text-decoration: none; border-bottom: 1px solid #d33; display: inline-block; line-height: 6px; }
  address .g { border-color: #3a9a4a; }
  .logo { margin-top: 9px; }
  .brand { flex: 1; text-align: center; padding: 20px 8px 0 0; margin-left: -5px; }
  h1 { font: 700 9px/11px Roboto, sans-serif; color: #111; text-decoration: underline; white-space: nowrap; }
  h2 { font: 700 5px/8px "Open Sans", sans-serif; color: #e81c1c; }
  .heading { height: 10px; border: 1px solid #217346; font: 700 7px/8px "Liberation Sans", sans-serif; text-align: center; }
  .irow { display: grid; grid-template-columns: 15fr 27fr 17fr 127fr 25fr 38fr 7fr 108fr; border-bottom: 1px solid #e0e0e0; }
  .irow span { display: flex; align-items: center; border-right: 1px solid #e6e6e6; white-space: nowrap; min-width: 0; }
  .irow .lab { flex-direction: column; align-items: flex-start; justify-content: space-evenly; line-height: 6px; padding-left: 1px; }
  .irow .lab em { padding-left: 1px; }
  .irow .colon { justify-content: center; }
  .irow .val { padding-left: 1px; }
  .plain { text-decoration: none; }
  .irow:last-child { border-bottom-color: #333; }
  .note { height: 21px; padding: 4px 0 0 16px; font-size: 6px; white-space: nowrap; }
  .lists { position: relative; }
  .mark { position: absolute; left: 22%; bottom: 2px; width: 51%; }
  table { border-collapse: separate; border-spacing: 0; }
  .items { position: relative; width: 100%; height: 65px; table-layout: fixed; font: 6px/7px "Liberation Serif", serif; color: #111; }
  .items .k1 { width: 15px; } .items .k2 { width: 24px; } .items .k3 { width: 34px; } .items .k4 { width: 25px; }
  .items .k5 { width: 38px; } .items .k6 { width: 49px; } .items .k7 { width: 67px; }
  .items th { height: 12px; padding: 0; font: 5px/5px Lato, sans-serif; border: solid #444; border-width: 1px 1px 1px 0; color: #1f2b4d; white-space: nowrap; }
  .items th :is(u, em) { display: block; }
  .items td { padding: 0 1px; border-right: 1px solid #444; white-space: nowrap; overflow: hidden; line-height: 6px; }
  .items tbody tr:nth-child(even) td { background-color: rgba(0, 0, 0, .06); }
  .items .code { padding: 0; text-align: center; }
  .items .sans { font: 5px/6px "Liberation Sans", sans-serif; color: #1f2b4d; }
  td div { display: flex; justify-content: space-between; padding: 0 1px; }

  .side { flex: 216 1 0; min-width: 0; background: #a0a0a0; display: flex; flex-direction: column; font-family: "Liberation Sans", sans-serif; }
  .panel { display: flex; height: 154px; }
  .form { padding: 37px 0 0 52px; width: 116px; display: flex; flex-direction: column; align-items: flex-start; color: #1f3050; }
  .form label { font-size: 7px; line-height: 9px; padding-left: 4px; white-space: nowrap; }
  .form input { width: 51px; height: 11px; margin-left: 3px; padding-right: 2px; border: 1px solid #555; text-align: right; font-size: 7px; }
  .form button { width: 62px; height: 25px; margin-top: 8px; border-radius: 3px; color: #fff; font: 11px/20px "Open Sans", sans-serif; box-shadow: inset 0 1px 1px rgba(255, 255, 255, .5), inset 0 -2px 2px rgba(0, 0, 0, .3), 0 1px 1px rgba(0, 0, 0, .4); }
  .form .cetak { background: linear-gradient(#a5ce50, #7fa83a); }
  .form .pdf { background: linear-gradient(#dd4a48, #b23030); margin-top: 16px; }
  .home { margin: 95px 0 0 9px; width: 38px; display: flex; flex-direction: column; align-items: center; text-decoration: none; color: #0c1c36; font: 700 8px/15px "DejaVu Sans", sans-serif; height: 36px; }
  .home span { width: 100%; text-align: center; background: linear-gradient(#4a90de, #2f6cb8); box-shadow: 0 1px 1px rgba(0, 0, 0, .4); }
  .tips { flex: 1; min-width: 0; overflow: hidden; padding-top: 39px; margin-left: -3px; font: 600 4px/6px "Open Sans", sans-serif; color: #f2f2f2; white-space: nowrap; height: 90px; }
  .tips span { display: inline-block; width: 30px; }
  .tips .in { padding-left: 18px; }
  .calc { width: 100%; height: 68px; table-layout: fixed; font-size: 5px; line-height: 6px; color: #222; }
  .calc .q1 { width: 54px; } .calc .q2 { width: 51px; } .calc .q3 { width: 54px; } .calc .q4 { width: 34px; }
  .calc th { height: 15px; padding: 0 0 0 14px; font: italic 700 5px/6px "Liberation Sans", sans-serif; }
  .calc th + th { padding: 0; }
  .calc td { padding: 0 1px; }
  .calc td:first-child { padding-left: 17px; }
  .cut { display: flex; align-items: center; justify-content: center; height: 8px; line-height: 6px; overflow: hidden; white-space: nowrap; }
</style>
